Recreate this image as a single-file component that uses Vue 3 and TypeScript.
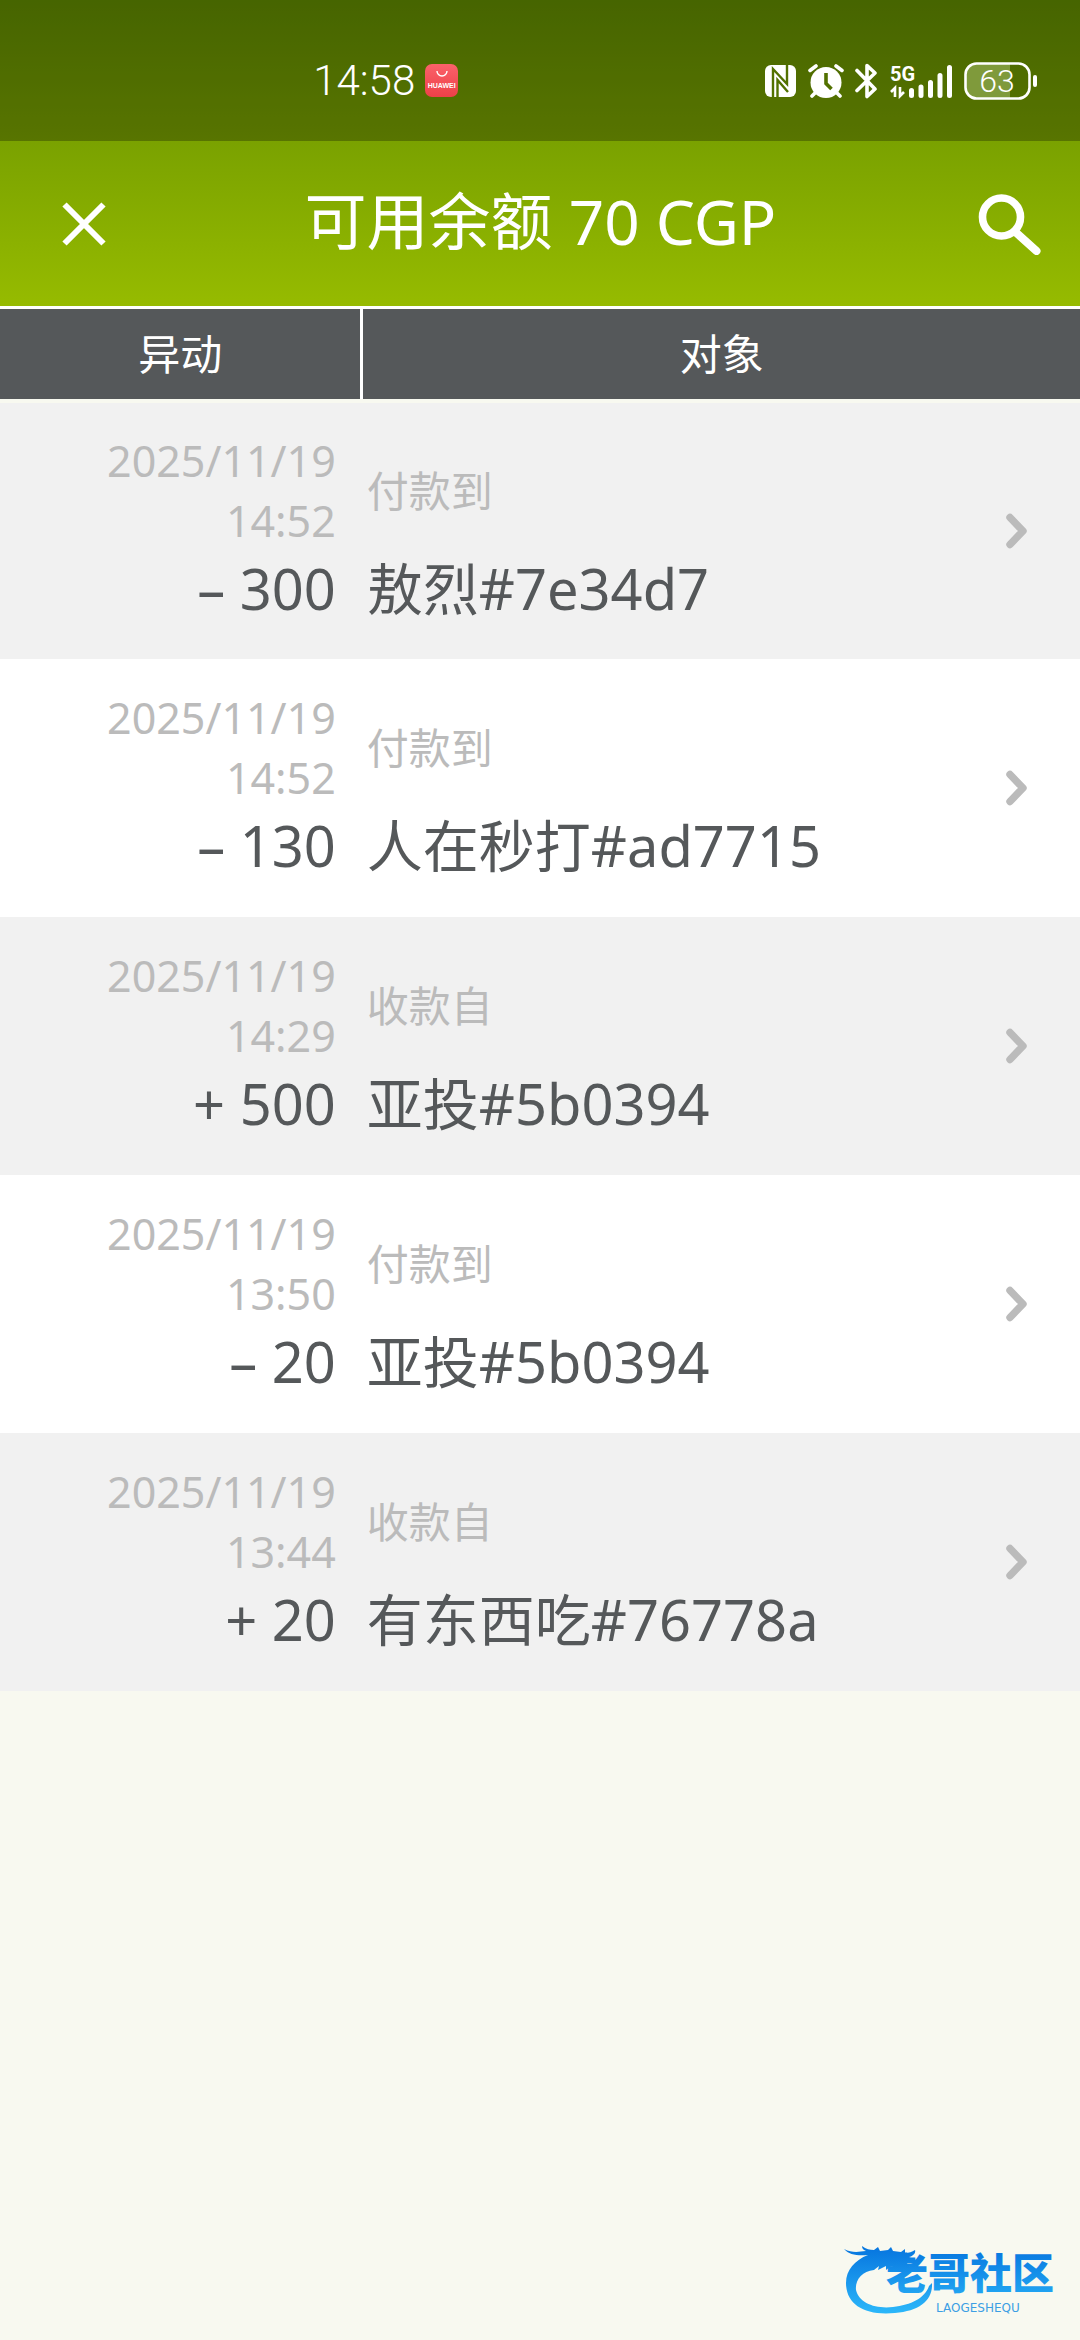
<script setup lang="ts">
interface Entry {
  date: string
  time: string
  amount: string
  kind: string
  party: string
}

const entries: Entry[] = [
  { date: '2025/11/19', time: '14:52', amount: '– 300', kind: '付款到', party: '敖烈#7e34d7' },
  { date: '2025/11/19', time: '14:52', amount: '– 130', kind: '付款到', party: '人在秒打#ad7715' },
  { date: '2025/11/19', time: '14:29', amount: '+ 500', kind: '收款自', party: '亚投#5b0394' },
  { date: '2025/11/19', time: '13:50', amount: '– 20', kind: '付款到', party: '亚投#5b0394' },
  { date: '2025/11/19', time: '13:44', amount: '+ 20', kind: '收款自', party: '有东西吃#76778a' },
]
</script>

<template>
  <div class="page">
    <div class="top">
      <div class="status">
        <div class="status-left">
          <span class="clock">14:58</span>
          <span class="app-badge">
            <svg width="14" height="7" viewBox="0 0 14 7" aria-hidden="true">
              <path d="M2 0a5 5 0 0 0 10 0" fill="none" stroke="#fff" stroke-width="1.4" />
            </svg>
            HUAWEI
          </span>
        </div>
        <div class="status-right">
          <svg width="31" height="32" viewBox="0 0 31 32" aria-hidden="true">
            <rect width="31" height="32" rx="6" fill="#fff" />
            <path d="M8 32V4l14 15V0" fill="none" stroke="#527100" stroke-width="2.400" />
            <path d="M12.500 32V15L23 27" fill="none" stroke="#527100" stroke-width="2.400" />
          </svg>
          <svg class="alarm" width="36" height="34" viewBox="0 0 36 34" aria-hidden="true">
            <circle cx="18" cy="18.500" r="15.500" fill="#fff" />
            <path d="M2 6.500 8 2M34 6.500 28 2M8 28l-4 4M28 28l4 4" stroke="#fff" stroke-width="3.600" stroke-linecap="round" />
            <path d="M18 9v10.500l5.500 5.500" fill="none" stroke="#527100" stroke-width="3.600" />
          </svg>
          <svg class="bluetooth" width="24" height="36" viewBox="0 0 24 36" aria-hidden="true">
            <path d="M2 7.500 20 26l-8 7.500V2.500L20 10 2 27.500" fill="none" stroke="#fff" stroke-width="3.600" stroke-linejoin="round" stroke-linecap="round" />
          </svg>
          <svg width="63" height="36" viewBox="0 0 63 36" aria-hidden="true">
            <text x="0" y="18" class="network">5G</text>
            <path d="M1 29l4-4v9M10 24v9l4-4" fill="none" stroke="#fff" stroke-width="2.600" />
            <path d="M21.500 27.500v5M31 24v8.500M40.500 19.500v13M50 12.500v20M59.500 4.500v28" stroke="#fff" stroke-width="5" stroke-linecap="round" />
          </svg>
          <svg class="battery" width="74" height="38" viewBox="0 0 74 38" aria-hidden="true">
            <path d="M12 2h34v34H12A10 10 0 0 1 2 26V12A10 10 0 0 1 12 2z" fill="#7f9a3b" />
            <rect x="1.500" y="1.500" width="64" height="35" rx="11" fill="none" stroke="#fff" stroke-width="2.600" />
            <rect x="69" y="13" width="4" height="12" rx="2" fill="#fff" />
            <text x="33" y="30" text-anchor="middle" class="charge">63</text>
          </svg>
        </div>
      </div>
      <header class="bar">
        <button type="button" class="icon-button" aria-label="关闭">
          <svg width="46" height="46" viewBox="0 0 46 46"><path d="M3.500 3.500l39 39M42.500 3.500l-39 39" stroke="#fff" stroke-width="6" /></svg>
        </button>
        <h1>可用余额 70 CGP</h1>
        <button type="button" class="icon-button search" aria-label="搜索">
          <svg width="64" height="62" viewBox="0 0 64 62">
            <circle cx="24.500" cy="24" r="19" fill="none" stroke="#fff" stroke-width="7.600" />
            <path d="M39 39.500 59.500 58" stroke="#fff" stroke-width="8" stroke-linecap="round" />
          </svg>
        </button>
      </header>
    </div>

    <table class="ledger">
      <thead>
        <tr><th scope="col">异动</th><th scope="col">对象</th></tr>
      </thead>
      <tbody>
        <tr v-for="(entry, index) in entries" :key="index">
          <td class="change">
            <div class="meta">{{ entry.date }}</div>
            <div class="meta">{{ entry.time }}</div>
            <div class="value">{{ entry.amount }}</div>
          </td>
          <td>
            <a href="#" class="detail">
              <span class="target">
                <span class="meta kind">{{ entry.kind }}</span>
                <span class="value">{{ entry.party }}</span>
              </span>
              <svg width="22" height="36" viewBox="0 0 22 36" aria-hidden="true">
                <path d="M4 4.500 17 18 4 31.500" fill="none" stroke="#bbb" stroke-width="7.400" stroke-linecap="round" stroke-linejoin="round" />
              </svg>
            </a>
          </td>
        </tr>
      </tbody>
    </table>

    <footer class="watermark">
      <svg width="226" height="82" viewBox="0 -6 226 82" role="img" aria-label="老哥社区">
        <defs>
          <linearGradient id="water" gradientUnits="userSpaceOnUse" x1="0" y1="8" x2="0" y2="72">
            <stop offset="0" stop-color="#0878e0" />
            <stop offset="1" stop-color="#2cb8fa" />
          </linearGradient>
        </defs>
        <path
          d="M4 7c8 4 14 3 22 2-3-1-4-3-4-5 4 3 8 4 12 4l4-3 2 4 8-1 3-3 2 4 8 1 4-3v4c4 0 7-1 10-3 1 3-2 6-6 7l4 2-2 2h-7c2 3 5 3 9 2-1 4-5 5-10 4-5 2-9-1-13 0l-4 3v-4l-8 4 1-4-5 4C22 29 15 38 16 48c3 13 19 19 37 17 18-2 32-9 36-21l3-3c1 17-12 28-37 30C24 74 6 62 6 41 6 28 15 18 28 13 18 14 9 13 4 7z"
          fill="url(#water)"
        />
        <text x="46" y="47" class="brand" fill="url(#water)">老哥社区</text>
        <text x="96" y="70" class="brand-latin">LAOGESHEQU</text>
      </svg>
    </footer>
  </div>
</template>

<style>
body {
  margin: 0;
}
</style>

<style scoped>
.page {
  display: flex;
  flex-direction: column;
  min-height: 100vh;
  background: #f8f9f0;
  color: #55585a;
  font-family: "Noto Sans", "Noto Sans CJK SC", sans-serif;
}

.top {
  background: linear-gradient(#628c00, #96bb00);
  border-bottom: 3px solid #fff;
  color: #fff;
}

.status {
  box-sizing: border-box;
  display: flex;
  align-items: center;
  justify-content: space-between;
  height: 141px;
  padding: 20px 42px 0 29%;
  background: rgba(0, 0, 0, 0.28);
}

.status-left,
.status-right {
  display: flex;
  align-items: center;
}

.status-left {
  gap: 10px;
}

.clock {
  font-family: Roboto, sans-serif;
  font-size: 42px;
  font-weight: 300;
  line-height: 48px;
}

.app-badge {
  display: flex;
  flex-direction: column;
  align-items: center;
  justify-content: center;
  gap: 3px;
  width: 33px;
  height: 33px;
  border-radius: 7px;
  background: linear-gradient(#fa626a, #ee4048);
  font: 700 7px/9px "Liberation Sans", sans-serif;
}

.alarm {
  margin-left: 12px;
}

.bluetooth {
  margin: 0 11px;
}

.battery {
  margin-left: 11px;
}

.network {
  font: 700 20px Roboto, sans-serif;
  fill: #fff;
}

.charge {
  font: 300 32px Roboto, sans-serif;
  fill: #fff;
}

.bar {
  display: grid;
  grid-template-columns: 1fr auto 1fr;
  align-items: center;
  height: 165px;
  padding: 0 39px 0 40px;
}

.icon-button {
  display: flex;
  padding: 0 0 0 21px;
  border: 0;
  background: none;
}

.search {
  justify-self: end;
}

h1 {
  margin: 0;
  padding-bottom: 6px;
  font-size: 62px;
  font-weight: 400;
  line-height: 84px;
}

.ledger {
  width: 100%;
  table-layout: fixed;
  border-collapse: collapse;
}

th {
  height: 90px;
  padding: 0;
  background: #55585a;
  color: #fff;
  font-size: 42px;
  font-weight: 400;
  line-height: 60px;
}

th:first-child {
  width: 33.5%;
  box-sizing: border-box;
  border-right: 3px solid #fff;
}

thead {
  border-bottom: 4px solid #f8f9f0;
}

td {
  box-sizing: border-box;
  height: 258px;
  padding: 0;
}

tbody tr {
  background: #fff;
}

tbody tr:nth-child(odd) {
  background: #f1f1f1;
}

.change {
  padding: 0 26px 6px 0;
  text-align: right;
}

.meta {
  color: #bbb;
  font-size: 43px;
  line-height: 60px;
}

.value {
  font-size: 56px;
  line-height: 74px;
}

.detail {
  display: flex;
  align-items: center;
  justify-content: space-between;
  padding: 0 52px 0 5px;
  color: inherit;
  text-decoration: none;
}

.target {
  display: flex;
  flex-direction: column;
  padding-bottom: 6px;
}

.kind {
  padding: 30px 0;
  font-size: 42px;
}

.watermark {
  display: flex;
  justify-content: flex-end;
  margin-top: auto;
  padding: 0 14px 22px;
}

.brand {
  font: 900 42px "Noto Sans CJK SC", sans-serif;
}

.brand-latin {
  font: 12px "DejaVu Sans", sans-serif;
  fill: #3c9fe4;
}
</style>
